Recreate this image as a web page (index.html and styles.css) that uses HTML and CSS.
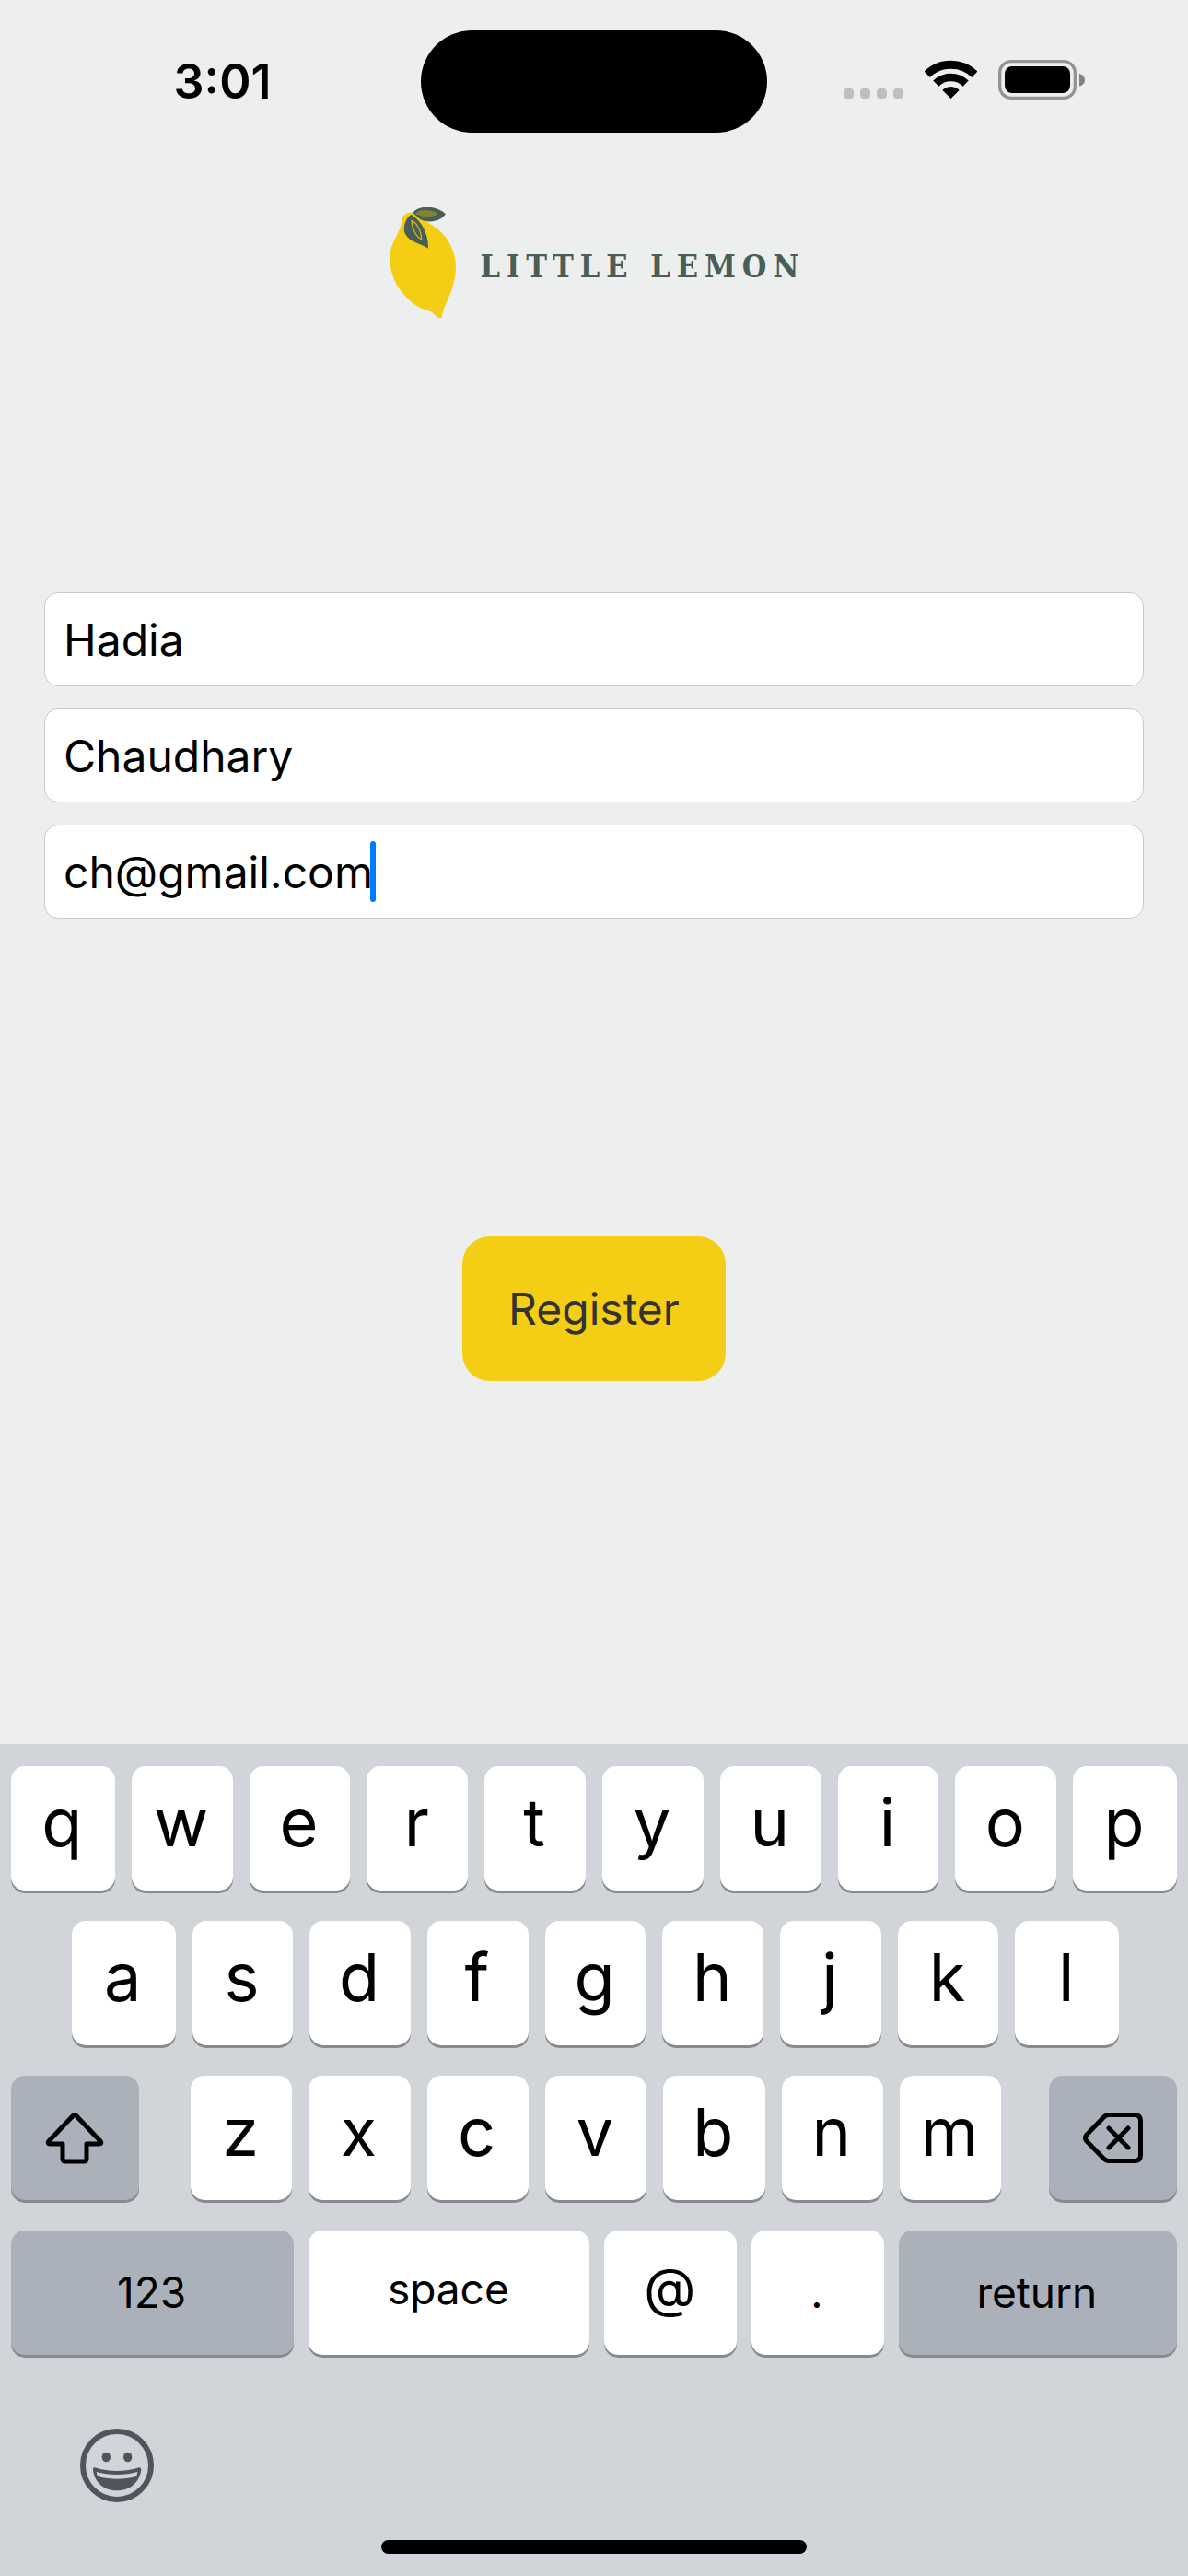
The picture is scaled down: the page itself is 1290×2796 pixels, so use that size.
FILE: index.html
```html
<!DOCTYPE html>
<html lang="en">
<head>
<meta charset="utf-8">
<meta name="viewport" content="width=device-width, initial-scale=1">
<title>Little Lemon</title>
<link rel="stylesheet" href="styles.css">
</head>
<body>
<div class="screen">
  <header class="status">
    <time class="clock">3:01</time>
    <div class="island"></div>
    <div class="indicators">
      <svg width="65" height="42" viewBox="0 0 65 42" fill="#bfbfbf" aria-hidden="true">
        <rect x="0" y="31" width="11" height="11" rx="4"/><rect x="18" y="31" width="11" height="11" rx="4"/><rect x="36" y="31" width="11" height="11" rx="4"/><rect x="54" y="31" width="11" height="11" rx="4"/>
      </svg>
      <svg width="57" height="42" viewBox="0 0 171 126" aria-hidden="true">
        <g fill="none" stroke="#000"><path stroke-width="27" d="M8 47A111 111 0 0 1 163 47"/><path stroke-width="26" d="M37 77A69 69 0 0 1 134 77"/></g>
        <path d="M85.500 126 59 100Q58 97 62 95Q72 87 85.500 87T109 95Q113 97 112 100Z"/>
      </svg>
      <svg width="94" height="43" viewBox="0 0 282 129" aria-hidden="true">
        <rect x="5" y="5" width="245" height="119" rx="37" fill="none" stroke="#939494" stroke-width="10"/>
        <rect x="21" y="21" width="213" height="87" rx="24"/>
        <path fill="#808181" d="M264 44C276 48 282 56 282 65S276 82 264 86Z"/>
      </svg>
    </div>
  </header>

  <main class="content">
    <div class="brand">
      <svg width="72" height="120" viewBox="0 0 216 360" aria-hidden="true">
        <path fill="#f4ce14" d="M75 17C58 14 41 24 39 45C38 82 3 110 1 160C-1 235 42 292 95 325C120 338 138 334 155 360H171C173 318 214 275 216 195C214 118 168 70 120 47C104 38 95 20 75 17Z"/>
        <path fill="#495e57" d="M76 18C92-6 150-10 183 22C166 47 126 53 98 38Z"/>
        <path fill="#7f8435" d="M84 20C100 3 142 8 158 22C138 34 106 34 84 20Z"/>
        <path fill="#495e57" d="M71 23C98 40 126 76 126 134C100 116 62 116 48 80C45 58 53 34 71 23Z"/>
        <path fill="none" stroke="#d0b51e" stroke-width="4" d="M72 44C90 50 103 78 104 105C88 98 72 68 72 44Z"/>
      </svg>
      <span class="wordmark">LITTLE LEMON</span>
    </div>

    <form class="form">
      <div class="fields">
        <input class="field" type="text" aria-label="First name" value="Hadia">
        <input class="field" type="text" aria-label="Last name" value="Chaudhary">
        <div class="active-field">
          <input class="field" type="text" inputmode="email" aria-label="Email" value="ch@gmail.com">
          <span class="caret"></span>
        </div>
      </div>
      <button class="register" type="button">Register</button>
    </form>
  </main>

  <section class="keyboard" aria-label="Keyboard">
    <div class="row row-top">
      <button class="key">q</button><button class="key">w</button><button class="key">e</button><button class="key">r</button><button class="key">t</button><button class="key">y</button><button class="key">u</button><button class="key">i</button><button class="key">o</button><button class="key">p</button>
    </div>
    <div class="row row-home">
      <button class="key">a</button><button class="key">s</button><button class="key">d</button><button class="key">f</button><button class="key">g</button><button class="key">h</button><button class="key">j</button><button class="key">k</button><button class="key">l</button>
    </div>
    <div class="row">
      <button class="key key-dark key-shift" aria-label="Shift">
        <svg width="64" height="56" viewBox="0 0 64 56" fill="none" stroke="#000" stroke-width="5" stroke-linejoin="round" aria-hidden="true"><path d="M29.500 4.200Q32 1.500 34.500 4.200L60 31Q62 34 59 34H45V50Q45 53 42 53H22Q19 53 19 50V34H5Q2 34 4 31Z"/></svg>
      </button>
      <button class="key">z</button><button class="key">x</button><button class="key">c</button><button class="key">v</button><button class="key">b</button><button class="key">n</button><button class="key">m</button>
      <button class="key key-dark key-delete" aria-label="Delete">
        <svg width="66" height="55" viewBox="0 0 66 55" fill="none" stroke="#000" stroke-width="5" stroke-linecap="round" stroke-linejoin="round" aria-hidden="true"><path d="M28 2.500H56Q62.500 2.500 62.500 9V46Q62.500 52.500 56 52.500H28Q25 52.500 22 49.500L4 31Q1 27.500 4 24L22 5.500Q25 2.500 28 2.500ZM28 17 49 38M49 17 28 38"/></svg>
      </button>
    </div>
    <div class="row row-bottom">
      <button class="key key-dark key-word key-numbers">123</button>
      <button class="key key-word key-space">space</button>
      <button class="key key-word key-symbol key-at">@</button>
      <button class="key key-word key-symbol">.</button>
      <button class="key key-dark key-word key-return">return</button>
    </div>
    <button class="emoji" aria-label="Emoji">
      <svg width="80" height="80" viewBox="0 0 240 240" fill="#50555c" aria-hidden="true">
        <circle cx="120" cy="120" r="111" fill="none" stroke="#50555c" stroke-width="18"/>
        <ellipse cx="85" cy="93" rx="14" ry="16"/><ellipse cx="155" cy="93" rx="14" ry="16"/>
        <path fill-rule="evenodd" d="M48 127C95 142 145 142 192 127Q199 127 199 134C193 178 160 202 120 202S47 178 42 134Q41 127 48 127ZM53 141Q54 151 59 156C98 167 142 167 182 156Q186 151 187 141C145 153 95 153 53 141Z"/>
      </svg>
    </button>
    <div class="home-bar"></div>
  </section>
</div>
</body>
</html>
```
FILE: styles.css
```css
* {
  box-sizing: border-box;
}

body {
  margin: 0;
  font-family: Inter, "Liberation Sans", sans-serif;
  color: #000;
  background: #edefee;
}

button,
input {
  margin: 0;
  font: inherit;
  color: inherit;
}

svg {
  display: block;
  flex: none;
}

.screen {
  display: flex;
  flex-direction: column;
  min-height: 100vh;
}

/* Status bar */
.status {
  display: grid;
  grid-template-columns: 1fr 376px 1fr;
  align-items: center;
  padding-top: 33px;
}

.clock {
  padding-left: 26px;
  font-size: 52px;
  font-weight: 600;
  line-height: 62px;
  text-align: center;
}

.island {
  height: 111px;
  border-radius: 56px;
  background: #000;
}

.indicators {
  display: flex;
  justify-content: center;
  gap: 23px;
  padding: 0 30px 4px 0;
}

/* Sign-up form */
.content {
  flex: 1;
  padding: 81px 48px 0;
}

.brand {
  display: flex;
  justify-content: center;
  align-items: center;
  gap: 27px;
}

.wordmark {
  margin-right: -7px;
  padding-top: 8px;
  font-family: "DejaVu Serif Condensed", "DejaVu Serif", serif;
  font-size: 34px;
  font-weight: 700;
  line-height: 40px;
  letter-spacing: 7px;
  color: #495e57;
}

.form {
  display: flex;
  flex-direction: column;
  align-items: center;
  gap: 345px;
  padding-top: 298px;
}

.fields {
  display: flex;
  flex-direction: column;
  gap: 24px;
  width: 100%;
}

.field {
  display: block;
  width: 100%;
  height: 102px;
  padding: 0 20px;
  border: 1px solid #c8c9c9;
  border-radius: 15px;
  outline: none;
  background: #fff;
  font-size: 48px;
}

.active-field {
  position: relative;
}

.caret {
  position: absolute;
  top: 18px;
  left: 354px;
  width: 6px;
  height: 66px;
  border-radius: 3px;
  background: #007aff;
}

.register {
  padding: 48px 50px;
  border: 0;
  border-radius: 30px;
  background: #f4ce14;
  font-size: 48px;
  line-height: 61px;
  color: #333;
}

/* Keyboard */
.keyboard {
  display: flex;
  flex-direction: column;
  gap: 33px;
  padding: 24px 12px;
  background: #d1d4d9;
}

.row {
  display: flex;
  gap: 18px;
}

.row-home {
  padding: 0 63px 0 66px;
}

.row-bottom {
  gap: 16px;
}

.key {
  display: flex;
  flex: 110 1 0;
  justify-content: center;
  align-items: center;
  min-width: 0;
  height: 135px;
  padding: 0 2px 14px 0;
  border: 0;
  border-radius: 15px;
  background: #fff;
  box-shadow: 0 3px 0 #898a8d;
  font-size: 72px;
  font-weight: 400;
}

.row-top .key:first-child,
.row-top .key:last-child,
.row-home .key:first-child,
.row-home .key:last-child {
  flex-grow: 113;
}

.key-dark {
  background: #abb1bb;
}

.key-shift {
  flex: 141 1 0;
  margin-right: 38px;
  padding: 0;
}

.key-delete {
  flex: 141 1 0;
  margin-left: 34px;
  padding: 0;
}

.key-word {
  padding: 0 2px 2px 0;
  font-size: 46px;
}

.key-numbers {
  flex: 308 1 0;
}

.key-space {
  flex: 306 1 0;
  padding-bottom: 10px;
}

.key-symbol {
  flex: 143 1 0;
}

.key-at {
  padding-bottom: 12px;
  font-size: 58px;
}

.key-return {
  flex: 303 1 0;
}

.emoji {
  align-self: flex-start;
  margin: 47px 0 0 75px;
  padding: 0;
  border: 0;
  background: none;
}

.home-bar {
  align-self: center;
  width: 462px;
  height: 15px;
  margin-top: 8px;
  border-radius: 8px;
  background: #000;
}
```
